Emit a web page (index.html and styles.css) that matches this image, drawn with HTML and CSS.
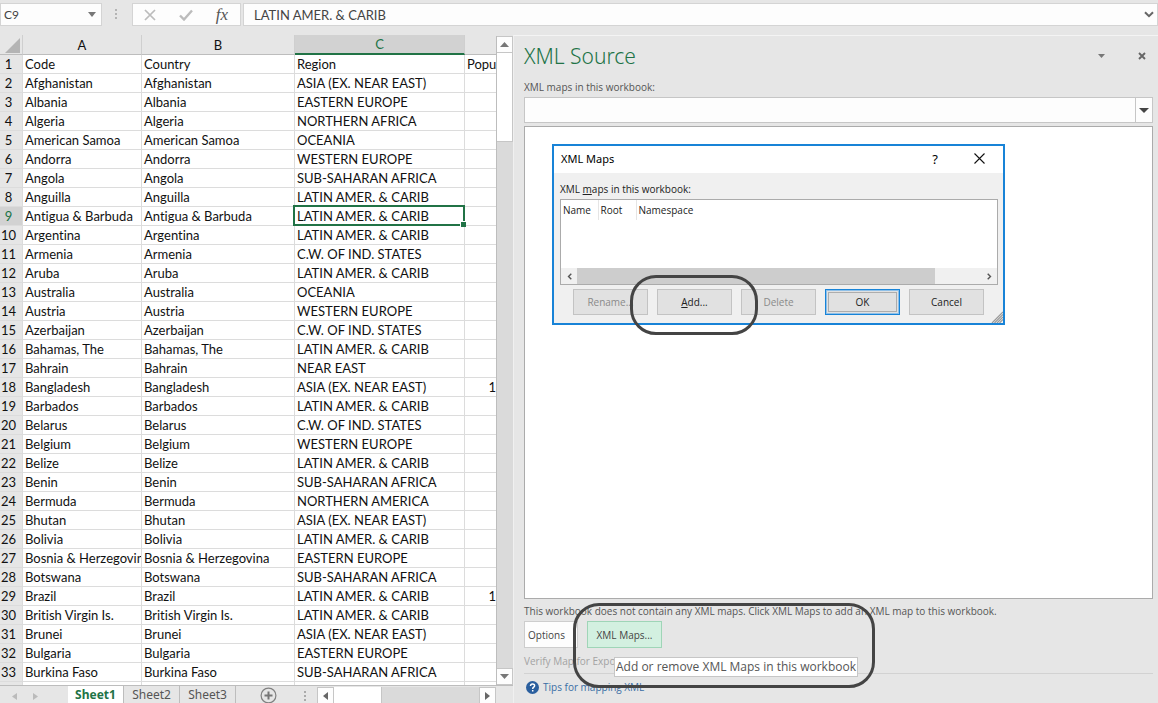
FILE: index.html
```html
<!DOCTYPE html>
<html lang="en">
<head>
<meta charset="utf-8">
<title>XML Source</title>
<link rel="stylesheet" href="styles.css">
</head>
<body>
<div class="app">
  <header class="formula-bar">
    <div class="name-box">
      <input class="name-input" type="text" value="C9" aria-label="Name box">
      <button class="icon-btn name-drop" aria-label="Names"><svg width="8" height="5" viewBox="0 0 8 5"><path d="M0 0h8L4 5z" fill="#777"/></svg></button>
    </div>
    <svg class="grip" width="3" height="11" viewBox="0 0 3 11"><path d="M0 0h2v2H0zM0 4h2v2H0zM0 8h2v2H0z" fill="#b4b4b4"/></svg>
    <div class="formula-tools">
      <button class="icon-btn" aria-label="Cancel entry"><svg width="12" height="12" viewBox="0 0 12 12"><path d="M1 1l10 10M11 1L1 11" stroke="#bcbcbc" stroke-width="1.7" fill="none"/></svg></button>
      <button class="icon-btn" aria-label="Enter"><svg width="14" height="12" viewBox="0 0 14 12"><path d="M1 6.5l4 4L13 1.5" stroke="#bcbcbc" stroke-width="2.4" fill="none"/></svg></button>
      <button class="icon-btn fx" aria-label="Insert function">fx</button>
    </div>
    <div class="formula-field">
      <input class="formula-input" type="text" value="LATIN AMER. &amp; CARIB" aria-label="Formula">
      <button class="icon-btn expand" aria-label="Expand formula bar"><svg width="10" height="7" viewBox="0 0 10 7"><path d="M1 1.2l4 4 4-4" stroke="#666" stroke-width="2" fill="none"/></svg></button>
    </div>
  </header>

  <div class="workspace">
    <main class="sheet">
      <div class="grid-row">
        <div class="grid-view">
          <table class="grid">
            <colgroup><col class="col-n"><col class="col-a"><col class="col-b"><col class="col-c"><col class="col-d"></colgroup>
            <thead>
              <tr><th class="corner"><svg width="15" height="15" viewBox="0 0 15 15"><path d="M15 0v15H0z" fill="#b4b4b4"/></svg></th><th>A</th><th>B</th><th class="active-col">C</th><th></th></tr>
            </thead>
            <tbody>
              <tr><th>1</th><td>Code</td><td>Country</td><td>Region</td><td>Popu</td></tr>
              <tr><th>2</th><td>Afghanistan</td><td>Afghanistan</td><td>ASIA (EX. NEAR EAST)</td><td></td></tr>
              <tr><th>3</th><td>Albania</td><td>Albania</td><td>EASTERN EUROPE</td><td></td></tr>
              <tr><th>4</th><td>Algeria</td><td>Algeria</td><td>NORTHERN AFRICA</td><td></td></tr>
              <tr><th>5</th><td>American Samoa</td><td>American Samoa</td><td>OCEANIA</td><td></td></tr>
              <tr><th>6</th><td>Andorra</td><td>Andorra</td><td>WESTERN EUROPE</td><td></td></tr>
              <tr><th>7</th><td>Angola</td><td>Angola</td><td>SUB-SAHARAN AFRICA</td><td></td></tr>
              <tr><th>8</th><td>Anguilla</td><td>Anguilla</td><td>LATIN AMER. &amp; CARIB</td><td></td></tr>
              <tr><th class="active-row">9</th><td>Antigua &amp; Barbuda</td><td>Antigua &amp; Barbuda</td><td class="selected">LATIN AMER. &amp; CARIB</td><td></td></tr>
              <tr><th>10</th><td>Argentina</td><td>Argentina</td><td>LATIN AMER. &amp; CARIB</td><td></td></tr>
              <tr><th>11</th><td>Armenia</td><td>Armenia</td><td>C.W. OF IND. STATES</td><td></td></tr>
              <tr><th>12</th><td>Aruba</td><td>Aruba</td><td>LATIN AMER. &amp; CARIB</td><td></td></tr>
              <tr><th>13</th><td>Australia</td><td>Australia</td><td>OCEANIA</td><td></td></tr>
              <tr><th>14</th><td>Austria</td><td>Austria</td><td>WESTERN EUROPE</td><td></td></tr>
              <tr><th>15</th><td>Azerbaijan</td><td>Azerbaijan</td><td>C.W. OF IND. STATES</td><td></td></tr>
              <tr><th>16</th><td>Bahamas, The</td><td>Bahamas, The</td><td>LATIN AMER. &amp; CARIB</td><td></td></tr>
              <tr><th>17</th><td>Bahrain</td><td>Bahrain</td><td>NEAR EAST</td><td></td></tr>
              <tr><th>18</th><td>Bangladesh</td><td>Bangladesh</td><td>ASIA (EX. NEAR EAST)</td><td class="num">1</td></tr>
              <tr><th>19</th><td>Barbados</td><td>Barbados</td><td>LATIN AMER. &amp; CARIB</td><td></td></tr>
              <tr><th>20</th><td>Belarus</td><td>Belarus</td><td>C.W. OF IND. STATES</td><td></td></tr>
              <tr><th>21</th><td>Belgium</td><td>Belgium</td><td>WESTERN EUROPE</td><td></td></tr>
              <tr><th>22</th><td>Belize</td><td>Belize</td><td>LATIN AMER. &amp; CARIB</td><td></td></tr>
              <tr><th>23</th><td>Benin</td><td>Benin</td><td>SUB-SAHARAN AFRICA</td><td></td></tr>
              <tr><th>24</th><td>Bermuda</td><td>Bermuda</td><td>NORTHERN AMERICA</td><td></td></tr>
              <tr><th>25</th><td>Bhutan</td><td>Bhutan</td><td>ASIA (EX. NEAR EAST)</td><td></td></tr>
              <tr><th>26</th><td>Bolivia</td><td>Bolivia</td><td>LATIN AMER. &amp; CARIB</td><td></td></tr>
              <tr><th>27</th><td>Bosnia &amp; Herzegovina</td><td>Bosnia &amp; Herzegovina</td><td>EASTERN EUROPE</td><td></td></tr>
              <tr><th>28</th><td>Botswana</td><td>Botswana</td><td>SUB-SAHARAN AFRICA</td><td></td></tr>
              <tr><th>29</th><td>Brazil</td><td>Brazil</td><td>LATIN AMER. &amp; CARIB</td><td class="num">1</td></tr>
              <tr><th>30</th><td>British Virgin Is.</td><td>British Virgin Is.</td><td>LATIN AMER. &amp; CARIB</td><td></td></tr>
              <tr><th>31</th><td>Brunei</td><td>Brunei</td><td>ASIA (EX. NEAR EAST)</td><td></td></tr>
              <tr><th>32</th><td>Bulgaria</td><td>Bulgaria</td><td>EASTERN EUROPE</td><td></td></tr>
              <tr><th>33</th><td>Burkina Faso</td><td>Burkina Faso</td><td>SUB-SAHARAN AFRICA</td><td></td></tr>
              <tr><th></th><td></td><td></td><td></td><td></td></tr>
            </tbody>
          </table>
        </div>
        <div class="v-scroll">
          <button class="scroll-btn" aria-label="Scroll up"><svg width="9" height="5" viewBox="0 0 9 5"><path d="M0 5h9L4.500 0z" fill="#777"/></svg></button>
          <div class="v-thumb"></div>
          <button class="scroll-btn v-down" aria-label="Scroll down"><svg width="9" height="5" viewBox="0 0 9 5"><path d="M0 0h9L4.500 5z" fill="#777"/></svg></button>
        </div>
      </div>
      <nav class="sheet-bar">
        <div class="tab-nav">
          <button class="icon-btn" aria-label="Previous sheet"><svg width="5" height="7" viewBox="0 0 5 7"><path d="M5 0v7L0 3.500z" fill="#bbb"/></svg></button>
          <button class="icon-btn" aria-label="Next sheet"><svg width="5" height="7" viewBox="0 0 5 7"><path d="M0 0v7l5-3.500z" fill="#bbb"/></svg></button>
        </div>
        <button class="tab tab-active">Sheet1</button>
        <button class="tab">Sheet2</button>
        <button class="tab">Sheet3</button>
        <button class="icon-btn add-sheet" aria-label="New sheet"><svg width="17" height="17" viewBox="0 0 17 17"><circle cx="8.500" cy="8.500" r="7.400" fill="none" stroke="#808080" stroke-width="1.200"/><path d="M8.500 4.500v8M4.500 8.500h8" stroke="#777" stroke-width="2"/></svg></button>
        <svg class="bar-grip" width="3" height="11" viewBox="0 0 3 11"><path d="M0 0h2v2H0zM0 4h2v2H0zM0 8h2v2H0z" fill="#aaa"/></svg>
        <div class="h-scroll">
          <button class="scroll-btn h-btn" aria-label="Scroll left"><svg width="5" height="8" viewBox="0 0 5 8"><path d="M5 0v8L0 4z" fill="#666"/></svg></button>
          <div class="h-thumb"></div>
          <button class="scroll-btn h-btn h-right" aria-label="Scroll right"><svg width="5" height="8" viewBox="0 0 5 8"><path d="M0 0v8l5-4z" fill="#666"/></svg></button>
        </div>
      </nav>
    </main>

    <aside class="pane">
      <div class="pane-head">
        <h1 class="pane-title">XML Source</h1>
        <button class="icon-btn" aria-label="Task pane options"><svg width="7" height="4" viewBox="0 0 7 4"><path d="M0 0h7L3.500 4z" fill="#777"/></svg></button>
        <button class="icon-btn" aria-label="Close pane"><svg width="8" height="8" viewBox="0 0 8 8"><path d="M1 1l6 6M7 1L1 7" stroke="#666" stroke-width="1.900"/></svg></button>
      </div>
      <label class="pane-label" for="maps">XML maps in this workbook:</label>
      <div class="combo">
        <select class="combo-select" id="maps"><option value=""></option></select>
        <span class="combo-arrow"><svg width="10" height="5" viewBox="0 0 10 5"><path d="M0 0h10L5 5z" fill="#444"/></svg></span>
      </div>
      <div class="tree">
        <section class="dialog" role="dialog" aria-labelledby="dialog-title">
          <div class="dialog-head">
            <h2 class="dialog-title" id="dialog-title">XML Maps</h2>
            <button class="icon-btn help" aria-label="Help">?</button>
            <button class="icon-btn" aria-label="Close"><svg width="11" height="11" viewBox="0 0 11 11"><path d="M.5.5l10 10M10.500.5l-10 10" stroke="#111" stroke-width="1.100"/></svg></button>
          </div>
          <div class="dialog-body">
            <p class="dialog-label">XML <u>m</u>aps in this workbook:</p>
            <div class="list">
              <table class="list-table">
                <thead><tr><th class="list-name">Name</th><th class="list-root">Root</th><th>Namespace</th></tr></thead>
              </table>
              <div class="list-scroll">
                <button class="list-btn" aria-label="Scroll left"><svg width="5" height="7" viewBox="0 0 5 7"><path d="M4.300.7L1.500 3.500l2.800 2.800" stroke="#555" stroke-width="1.400" fill="none"/></svg></button>
                <div class="list-thumb"></div>
                <button class="list-btn" aria-label="Scroll right"><svg width="5" height="7" viewBox="0 0 5 7"><path d="M.7.7l2.800 2.800L.7 6.300" stroke="#555" stroke-width="1.400" fill="none"/></svg></button>
              </div>
            </div>
            <div class="actions">
              <button class="btn" disabled>Rename...</button>
              <button class="btn"><u>A</u>dd...</button>
              <button class="btn" disabled>Delete</button>
              <button class="btn btn-default"><span class="focus-ring">OK</span></button>
              <button class="btn">Cancel</button>
            </div>
          </div>
          <svg class="resize" width="12" height="12" viewBox="0 0 12 12"><path d="M1 12L12 1M3.500 12L12 3.500M6 12l6-6M8.500 12L12 8.500" stroke="#999" stroke-width="1.200"/></svg>
          <div class="callout callout-add"></div>
        </section>
      </div>
      <footer class="pane-foot">
        <p class="status">This workbook does not contain any XML maps. Click XML Maps to add an XML map to this workbook.</p>
        <div class="foot-actions">
          <button class="foot-btn">Options</button>
          <button class="foot-btn foot-btn-hot">XML Maps...</button>
        </div>
        <p class="verify">Verify Map for Export...</p>
        <div class="tips">
          <svg width="13" height="13" viewBox="0 0 13 13"><circle cx="6.500" cy="6.500" r="6.500" fill="#2b5f9e"/><path d="M4.500 5.100c0-2.900 4.100-2.700 4.100-.4 0 1.500-1.900 1.500-1.900 3.200M6.700 9v1.500" stroke="#fff" stroke-width="1.500" fill="none"/></svg>
          <a class="tips-link" href="#">Tips for mapping XML</a>
        </div>
        <div class="tooltip" role="tooltip">Add or remove XML Maps in this workbook</div>
        <div class="callout callout-maps"></div>
      </footer>
    </aside>
  </div>
</div>
</body>
</html>
```
FILE: styles.css
```css
* { box-sizing: border-box; }

body {
  margin: 0;
  background: #e6e6e6;
  color: #111;
  font-family: "Open Sans", "Noto Sans", sans-serif;
  font-size: 10px;
}

button, input, select { font-family: inherit; font-size: inherit; color: inherit; }
h1, h2, p { margin: 0; font-weight: 400; }
svg { display: block; flex: none; }

.app { display: flex; flex-direction: column; height: 100vh; overflow: hidden; }

.icon-btn {
  display: flex;
  align-items: center;
  justify-content: center;
  padding: 0;
  border: 0;
  background: none;
}

/* Formula bar */
.formula-bar { display: flex; align-items: center; height: 35px; padding: 3px 0 9px; flex: none; }
.name-box, .formula-tools, .formula-field {
  display: flex;
  align-items: center;
  height: 23px;
  background: #fdfdfd;
  border: 1px solid #d4d4d4;
}
.name-box { width: 102px; padding-right: 5px; }
.name-input, .formula-input {
  flex: 1;
  min-width: 0;
  border: 0;
  padding: 0 0 0 3px;
  background: none;
  color: #444;
  font-family: Lato, sans-serif;
  font-size: 13px;
}
.name-input { font-size: 12px; }
.grip { margin: 0 14px 0 13px; }
.formula-tools { width: 109px; justify-content: space-between; padding: 0 12px 0 11px; }
.fx { font: italic 17px/20px "Liberation Serif", serif; color: #555; }
.formula-field { flex: 1; margin-left: 2px; padding-right: 3px; }
.formula-input { padding-left: 10px; }

.workspace { display: flex; flex: 1; min-height: 0; }

/* Worksheet */
.sheet { display: flex; flex-direction: column; flex: 0 0 513px; min-width: 0; }
.grid-row { display: flex; flex: 1; min-height: 0; }
.grid-view { flex: 1; min-width: 0; overflow: hidden; }
.grid {
  width: 100%;
  table-layout: fixed;
  border-collapse: separate;
  border-spacing: 0;
  font-family: Lato, sans-serif;
  font-size: 13px;
  font-variant-ligatures: none;
  line-height: 18px;
}
.col-n { width: 23px; }
.col-a { width: 119px; }
.col-b { width: 153px; }
.col-c { width: 170px; }
.grid th, .grid td {
  height: 19px;
  padding: 0 0 0 2px;
  overflow: hidden;
  white-space: nowrap;
  text-align: left;
  border-right: 1px solid #dcdcdc;
  border-bottom: 1px solid #dcdcdc;
}
.grid td { background: #fff; }
.grid th { font-weight: 400; padding: 0 5px 0 0; text-align: center; background: #e6e6e6; }
.grid thead th { height: 20px; padding: 1px 0 0; line-height: 17px; border-right-color: #cfcfcf; border-bottom-color: #bdbdbd; }
.grid thead .corner { padding: 2px 2px 1px 5px; }
.grid thead .active-col { padding: 1px 0 0; background: #d2d2d2; color: #217346; border-bottom: 2px solid #217346; }
.grid .active-row { background: #d2d2d2; color: #217346; }
.grid th:last-child, .grid td:last-child { border-right: 0; }
.grid .num { padding: 0; text-align: right; }
.grid .selected { position: relative; overflow: visible; }
.selected::before {
  content: "";
  position: absolute;
  inset: -2px -1px -1px -2px;
  border: 2px solid #217346;
}
.selected::after {
  content: "";
  position: absolute;
  right: -2px;
  bottom: -2px;
  width: 5px;
  height: 5px;
  background: #217346;
  border: solid #fff;
  border-width: 1px 0 0 1px;
}

.v-scroll { display: flex; flex-direction: column; width: 17px; margin-top: 1px; background: #dadada; border-left: 1px solid #bdbdbd; }
.scroll-btn {
  display: flex;
  align-items: center;
  justify-content: center;
  height: 17px;
  padding: 0;
  background: #fdfdfd;
  border: 1px solid #c6c6c6;
}
.v-scroll .scroll-btn { border-left: 0; }
.v-thumb { height: 89px; background: #fff; border: 1px solid #c6c6c6; border-width: 0 1px 1px 0; }
.v-down { margin-top: auto; }

.sheet-bar { display: flex; align-items: stretch; height: 18px; border-top: 1px solid #bdbdbd; flex: none; }
.tab-nav { display: flex; align-items: center; gap: 16px; width: 68px; padding: 3px 0 0 12px; }
.tab {
  width: 56px;
  padding: 0;
  border: 0;
  border-right: 1px solid #bdbdbd;
  background: none;
  color: #555;
  font-family: "Noto Sans", sans-serif;
  font-size: 12px;
  line-height: 17px;
}
.tab-active { background: #fff; color: #217346; font-weight: 700; }
.add-sheet { margin: 2px 0 0 24px; }
.bar-grip { margin: 5px 0 0 27px; }
.h-scroll { display: flex; width: 179px; margin: 1px 17px 0 auto; background: #dadada; }
.h-btn { width: 17px; height: 100%; border-bottom: 0; }
.h-thumb { width: 48px; background: #fff; border-right: 1px solid #c6c6c6; }
.h-right { margin-left: auto; }

/* Task pane */
.pane {
  display: flex;
  flex-direction: column;
  flex: 1;
  min-width: 0;
  padding: 0 5px 0 10px;
  border-top: 1px solid #f4f4f4;
  border-left: 1px solid #f0f0f0;
}
.pane-head { display: flex; align-items: center; gap: 33px; height: 40px; padding-right: 7px; }
.pane-title { flex: 1; color: #217346; font-family: "Noto Sans", "Open Sans", sans-serif; font-size: 21px; font-weight: 300; line-height: 40px; }
.pane-label { height: 21px; color: #555; line-height: 22px; }
.combo { position: relative; display: flex; height: 26px; margin-bottom: 3px; }
.combo-select { flex: 1; appearance: none; background: #fdfdfd; border: 1px solid #c6c6c6; border-radius: 0; }
.combo-arrow {
  position: absolute;
  inset: 1px 1px 1px auto;
  display: flex;
  align-items: center;
  justify-content: center;
  width: 17px;
  border-left: 1px solid #c6c6c6;
  pointer-events: none;
}
.tree { position: relative; flex: 1; background: #fff; border: 1px solid #ababab; }

/* Dialog floating over the map tree */
.dialog {
  position: absolute;
  top: 17px;
  left: 27px;
  width: 453px;
  background: #f0f0f0;
  border: 2px solid #1883d7;
}
.dialog-head { display: flex; align-items: center; gap: 36px; height: 27px; padding: 0 18px 2px 7px; background: #fff; }
.dialog-title { flex: 1; font-family: "Noto Sans", sans-serif; font-size: 11px; color: #000; }
.help { font-family: "Noto Sans", sans-serif; font-size: 13px; color: #000; }
.dialog-body { padding: 6px 5px 8px 6px; color: #222; }
.dialog-label { height: 20px; line-height: 20px; }
.list { display: flex; flex-direction: column; justify-content: space-between; height: 86px; background: #fff; border: 1px solid #ababab; }
.list-table { width: 100%; border-collapse: collapse; line-height: 20px; }
.list-table th { padding: 0 0 0 2px; font-weight: 400; text-align: left; }
.list-table .list-name { width: 37px; border-right: 1px solid #e5e5e5; }
.list-table .list-root { width: 38px; border-right: 1px solid #e5e5e5; }
.list-scroll { display: flex; height: 16px; background: #f0f0f0; }
.list-btn { display: flex; align-items: center; justify-content: center; width: 16px; padding: 0; border: 0; background: none; }
.list-thumb { width: 358px; margin-right: auto; background: #cdcdcd; }
.actions { display: flex; gap: 9px; padding: 4px 14px 0 13px; }
.btn { flex: 1 1 75px; height: 26px; padding: 0; color: #222; background: #e1e1e1; border: 1px solid #c3c3c3; }
.btn:disabled { color: #8a8a8a; }
.btn-default { display: flex; padding: 2px; border-color: #1883d7; outline: 1px solid #8fc0e8; outline-offset: -2px; }
.focus-ring { flex: 1; border: 1px solid #adadad; line-height: 18px; }
.resize { position: absolute; right: 0; bottom: 0; }

.callout { position: absolute; border: 3px solid #444; pointer-events: none; }
.callout-add { top: 129px; left: 76px; width: 128px; height: 60px; border-radius: 26px; }

/* Pane footer */
.pane-foot { position: relative; height: 104px; color: #555; }
.status { padding-top: 3px; line-height: 18px; white-space: nowrap; }
.foot-actions { display: flex; gap: 9px; padding-top: 1px; }
.foot-btn { height: 27px; padding: 0 3px; color: #444; background: #fdfdfd; border: 1px solid #cdcdcd; text-align: left; width: 54px; }
.foot-btn-hot { width: 75px; text-align: center; background: #d3f0e0; border-color: #9fd5b7; }
.verify { height: 26px; color: #a3a3a3; line-height: 26px; border-bottom: 1px solid #d2d2d2; }
.tips { display: flex; align-items: center; gap: 4px; padding: 6px 2px 0; }
.tips-link { color: #3a6ea5; text-decoration: none; }
.tooltip {
  position: absolute;
  top: 58px;
  left: 90px;
  padding: 0 1px;
  color: #555;
  background: #fff;
  border: 1px solid #c6c6c6;
  font-size: 12px;
  line-height: 18px;
  white-space: nowrap;
}
.callout-maps { top: 4px; left: 49px; width: 302px; height: 85px; border-radius: 26px; }
```
